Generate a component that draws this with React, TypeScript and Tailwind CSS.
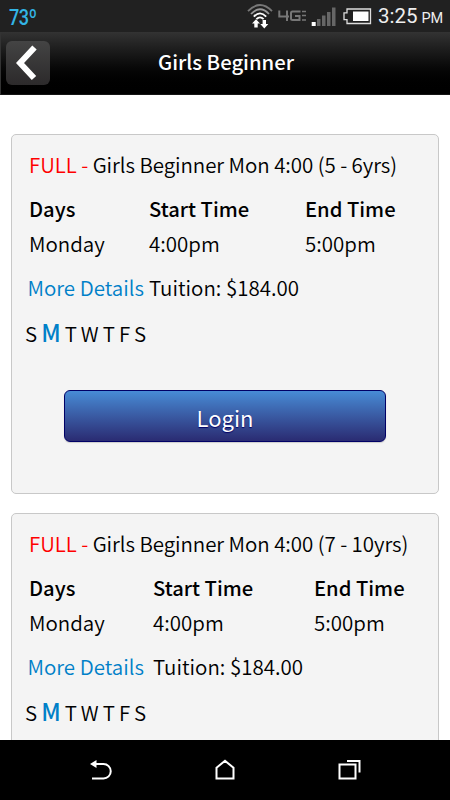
interface ClassInfo {
  name: string
  columns: string
  day: string
  start: string
  end: string
  tuition: string
  login: boolean
}

const classes: ClassInfo[] = [
  {
    name: 'Girls Beginner Mon 4:00 (5 - 6yrs)',
    columns: 'grid-cols-[120px_156px_1fr]',
    day: 'Monday',
    start: '4:00pm',
    end: '5:00pm',
    tuition: '$184.00',
    login: true,
  },
  {
    name: 'Girls Beginner Mon 4:00 (7 - 10yrs)',
    columns: 'grid-cols-[124px_161px_1fr]',
    day: 'Monday',
    start: '4:00pm',
    end: '5:00pm',
    tuition: '$184.00',
    login: false,
  },
]

const week = ['S', 'M', 'T', 'W', 'T', 'F', 'S']

function WifiIcon() {
  return (
    <svg width="26" height="26" viewBox="0 0 26 26" fill="none" strokeWidth="1.8">
      <path d="M1 8.2Q13 -4.2 25 8.2" stroke="#777" />
      <path d="M4 11Q13 1.5 22 11" stroke="#999" />
      <path d="M6.8 13.6Q13 7 19.2 13.6" stroke="#fff" />
      <path d="M9.4 16.2Q13 12.4 16.6 16.2" stroke="#fff" />
      <path d="M9 16.2L13 20.6H10.7V24.6H7.3V20.6H5Z" fill="#fff" />
      <path d="M17.3 25.4L13.3 21H15.6V17H19V21H21.3Z" fill="#fff" />
    </svg>
  )
}

function NetworkIcon() {
  return (
    <svg width="28" height="12" viewBox="0 0 28 12" fill="none" stroke="#777" strokeWidth="2">
      <path d="M1.3 .5V6.5H11M9 .5V11" />
      <path d="M22.5 1.5H14.5Q13 1.5 13 3V8.5Q13 10 14.5 10H21.5V6H17" />
      <path d="M24 1.5H28M24 5.5H28M24 10H28" strokeWidth="1.4" />
    </svg>
  )
}

function SignalIcon() {
  return (
    <svg width="25" height="20" viewBox="0 0 25 20" fill="#666">
      <path d="M.7 15H4.7V19H.7Z" fill="#fff" />
      <path d="M6 12H9.5V19H6ZM11 8.5H14.5V19H11ZM16 5H19.5V19H16ZM21 .5H24.5V19H21Z" />
    </svg>
  )
}

function BatteryIcon() {
  return (
    <svg width="29" height="17" viewBox="0 0 29 17" fill="none">
      <path d="M4 1H27.5V15.5H4V11.7H1V4.8H4Z" stroke="#ddd" strokeWidth="1.3" />
      <path d="M10 3.5H25.5V13H10Z" fill="#fff" />
    </svg>
  )
}

function StatusBar() {
  return (
    <div className="flex h-8 items-center bg-[#212121] pl-[9px] font-['Roboto',sans-serif] font-normal">
      <span className="w-[238px] text-[22px] leading-8 font-medium tracking-[-0.5px] text-[#33b5e5]">
        <span className="inline-block origin-left scale-x-[0.82] pt-[3px]">73º</span>
      </span>
      <WifiIcon />
      <span className="ml-[5px]">
        <NetworkIcon />
      </span>
      <span className="mt-[2px] ml-[5px]">
        <SignalIcon />
      </span>
      <span className="ml-[7px]">
        <BatteryIcon />
      </span>
      <span className="ml-[6px] pt-[2px] text-[20.5px] leading-8 whitespace-nowrap text-[#eee]">
        3:25<span className="ml-[4px] text-[14.5px] tracking-[-0.3px]">PM</span>
      </span>
    </div>
  )
}

function Header() {
  return (
    <header className="flex h-[63px] items-center border-b border-l border-b-[#151515] border-l-[#333] bg-linear-to-b from-[#333] to-black pb-px pl-[5px]">
      <button className="flex size-11 items-center justify-center rounded-[6px] bg-linear-to-b from-[#444] to-[#2c2a2b]">
        <svg width="24" height="36" viewBox="0 0 24 36" fill="none" stroke="#fff" strokeWidth="6">
          <path d="M18.5 2.5L4 18L18 33" />
        </svg>
      </button>
      <h1 className="mr-[48px] flex-1 pb-[3px] text-center text-[20.3px] leading-[57px] font-medium text-white">
        Girls Beginner
      </h1>
    </header>
  )
}

function ClassCard({ info }: { info: ClassInfo }) {
  return (
    <section className="h-[360px] shrink-0 rounded-[5px] border border-[#c8c8c8] bg-[#f4f4f4] px-[17px] pt-[13px] whitespace-nowrap">
      <h2 className="h-8 leading-8 tracking-[-0.06px]">
        <span className="text-[#ff0000]">FULL - </span>
        {info.name}
      </h2>
      <div className={`mt-[11px] grid leading-[35px] ${info.columns}`}>
        <b className="text-[20.2px] font-medium">Days</b>
        <b className="text-[20.2px] font-medium">Start Time</b>
        <b className="text-[20.2px] font-medium">End Time</b>
        <span>{info.day}</span>
        <span>{info.start}</span>
        <span>{info.end}</span>
      </div>
      <div className={`mt-[9px] grid leading-[35px] ${info.columns}`}>
        <a className="-ml-[1.5px] text-[#0080c8]">More Details</a>
        <span>Tuition: {info.tuition}</span>
      </div>
      <div className="mt-[10px] -ml-[4px] flex h-[35px] items-baseline gap-[4px] leading-[35px]">
        {week.map((d, i) => (
          <span key={i} className={i === 1 ? 'text-[23.5px] font-medium text-[#0080c8]' : ''}>
            {d}
          </span>
        ))}
      </div>
      {info.login && (
        <button className="mx-auto mt-[40px] block h-[52px] w-[322px] rounded-[6px] border border-[#000066] bg-linear-to-b from-[#478cd6] to-[#2a2b72] text-[22px] leading-[52px] font-normal text-white shadow-[0_1px_1px_#ccc] [text-shadow:0_1px_1px_#000066]">
          Login
        </button>
      )}
    </section>
  )
}

function NavBar() {
  return (
    <nav className="flex h-[60px] items-center justify-between bg-black px-[89px]">
      <svg width="23" height="22" viewBox="0 0 23 22" fill="none" stroke="#fff" strokeWidth="2">
        <path d="M6 5H14.5A7.2 7.2 0 0 1 14.5 19.5H3" />
        <path d="M1 5L7.5 1V9Z" fill="#fff" stroke="none" />
      </svg>
      <svg width="22" height="22" viewBox="0 0 22 22" fill="none" stroke="#fff" strokeWidth="2">
        <path d="M2.5 8.8L11 1.8L19.5 8.8V19.5H2.5Z" />
      </svg>
      <svg width="23" height="22" viewBox="0 0 23 22" fill="none" stroke="#fff" strokeWidth="2">
        <path d="M1.5 5.5H17.5V19.5H1.5Z" />
        <path d="M9 2H21.5V13.5" />
      </svg>
    </nav>
  )
}

export default function App() {
  return (
    <div className="flex h-[800px] w-[450px] flex-col overflow-hidden bg-white font-['Noto_Sans_CJK_SC',sans-serif] text-[20.5px] font-[350] text-black">
      <StatusBar />
      <Header />
      <main className="flex min-h-0 flex-1 flex-col gap-[19px] overflow-hidden pt-[39px] pr-[11px] pl-[11px]">
        {classes.map((info) => (
          <ClassCard key={info.name} info={info} />
        ))}
      </main>
      <NavBar />
    </div>
  )
}
